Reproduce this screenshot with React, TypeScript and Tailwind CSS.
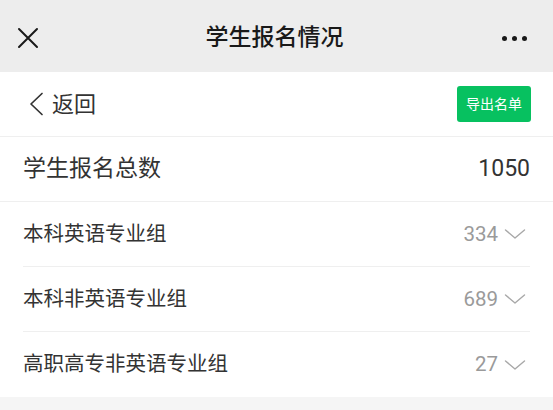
const groups = [
  { name: '本科英语专业组', count: 334 },
  { name: '本科非英语专业组', count: 689 },
  { name: '高职高专非英语专业组', count: 27 },
]

const DownArrow = () => (
  <svg width="22" height="12" viewBox="0 0 22 12" fill="none" className="text-[#a8a8a8] mr-[4px]">
    <path d="M1.5 2 L11 10 L20.5 2" stroke="currentColor" strokeWidth="1.4" strokeLinecap="round" strokeLinejoin="round" />
  </svg>
)

export default function App() {
  return (
    <div
      className="min-h-[410px] bg-[#f5f5f5] text-[#333]"
      style={{ fontFamily: 'Roboto, "Noto Sans CJK SC", sans-serif' }}
    >
      {/* top bar */}
      <div className="h-[72px] bg-[#ededed] flex items-center justify-between pt-[4px] pl-[17px] pr-[26px]">
        <svg width="22" height="22" viewBox="0 0 22 22" fill="none" className="text-[#191919]">
          <path d="M2 2 L20 20 M20 2 L2 20" stroke="currentColor" strokeWidth="2" strokeLinecap="round" />
        </svg>
        <div className="text-[23px] font-medium text-[#191919] pl-[8px]">学生报名情况</div>
        <div className="flex items-center gap-[5px]">
          <span className="w-[5px] h-[5px] rounded-full bg-[#191919]"></span>
          <span className="w-[5px] h-[5px] rounded-full bg-[#191919]"></span>
          <span className="w-[5px] h-[5px] rounded-full bg-[#191919]"></span>
        </div>
      </div>

      <div className="bg-white">
        <div className="h-[65px] flex items-center justify-between pl-[29px] pr-[22px] border-b border-[#efefef]">
          <div className="flex items-center gap-[8px]">
            <svg width="15" height="24" viewBox="0 0 15 24" fill="none" className="text-[#333]">
              <path d="M13 1.5 L2 12 L13 22.5" stroke="currentColor" strokeWidth="1.7" strokeLinecap="round" strokeLinejoin="round" />
            </svg>
            <span className="text-[22px]">返回</span>
          </div>
          <button className="w-[74px] h-[36px] rounded-[3px] bg-[#07c160] text-white text-[14px]">
            导出名单
          </button>
        </div>

        <div className="h-[65px] flex items-center justify-between px-[23px] border-b border-[#efefef]">
          <span className="text-[23px]">学生报名总数</span>
          <span className="text-[23px]">1050</span>
        </div>

        <div className="px-[23px]">
          {groups.map((g, i) => (
            <div
              key={g.name}
              className={`h-[65px] flex items-center justify-between ${
                i < groups.length - 1 ? 'border-b border-[#efefef]' : ''
              }`}
            >
              <span className="text-[20.5px]">{g.name}</span>
              <div className="flex items-center gap-[6px] text-[#9a9a9a]">
                <span className="text-[20.5px]">{g.count}</span>
                <DownArrow />
              </div>
            </div>
          ))}
        </div>
      </div>
    </div>
  )
}
